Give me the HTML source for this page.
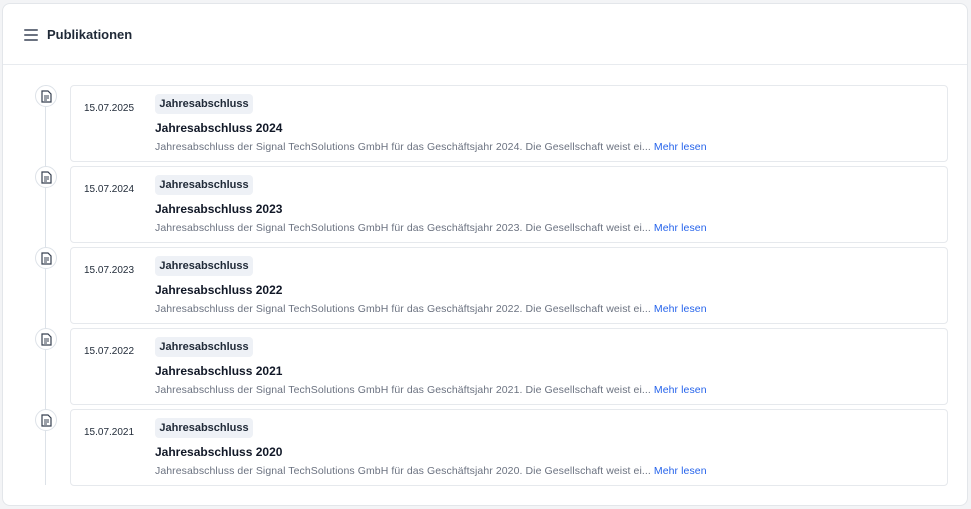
<!DOCTYPE html>
<html><head><meta charset="utf-8"><style>
*{box-sizing:border-box;margin:0;padding:0}
body{width:971px;height:509px;background:#f3f4f6;font-family:"Liberation Sans",sans-serif;position:relative;overflow:hidden}
.card{position:absolute;left:2px;top:3px;width:966px;height:503px;background:#fff;border:1px solid #e3e6ea;border-radius:8px}
.hdr{position:absolute;left:0;top:0;width:100%;height:61px;border-bottom:1px solid #e8ebef}
.ham{position:absolute;left:21px;top:25px;width:14px}
.ham i{display:block;height:2px;background:#6b7280;margin-bottom:3px;border-radius:1px}
.ttl{position:absolute;left:44px;top:23px;font-size:13px;font-weight:bold;color:#1f2937}
.line{position:absolute;left:45px;top:107px;width:1px;height:378px;background:#dde2e8}
.ic{position:absolute;left:35px;width:22px;height:22px;border-radius:50%;background:#fff;border:1px solid #dde2e8}
.ic svg{position:absolute;left:5px;top:4px}
.it{position:absolute;left:70px;width:878px;height:77px;border:1px solid #e6e9ed;border-radius:4px;background:#fff}
.dt{position:absolute;left:13px;top:17px;font-size:10px;color:#1f2937}
.bd{position:absolute;left:84px;top:8px;width:98px;height:20px;background:#eef1f6;border-radius:4px;font-size:11px;font-weight:bold;color:#1f2937;text-align:center;line-height:20px}
.t{position:absolute;left:84px;top:35px;font-size:12px;font-weight:bold;color:#111827}
.d{position:absolute;left:84px;top:55px;font-size:10.5px;color:#6b7280;white-space:nowrap;letter-spacing:0.08px}
.d b{color:#2563eb;font-weight:normal}
</style></head><body>
<div class="card">
<div class="hdr"><div class="ham"><i></i><i></i><i></i></div><div class="ttl">Publikationen</div></div>
</div>
<div class="line"></div>
<div class="ic" style="top:85px"><svg width="11" height="13" viewBox="0 0 11 13"><path d="M1 1h6l3 3v8H1z" fill="none" stroke="#374151" stroke-width="1.2"/><path d="M3 6h5M3 8h5M3 10h3" stroke="#374151" stroke-width="1"/></svg></div>
<div class="it" style="top:85px"><div class="dt">15.07.2025</div><div class="bd">Jahresabschluss</div><div class="t">Jahresabschluss 2024</div><div class="d">Jahresabschluss der Signal TechSolutions GmbH für das Geschäftsjahr 2024. Die Gesellschaft weist ei... <b>Mehr lesen</b></div></div>
<div class="ic" style="top:166px"><svg width="11" height="13" viewBox="0 0 11 13"><path d="M1 1h6l3 3v8H1z" fill="none" stroke="#374151" stroke-width="1.2"/><path d="M3 6h5M3 8h5M3 10h3" stroke="#374151" stroke-width="1"/></svg></div>
<div class="it" style="top:166px"><div class="dt">15.07.2024</div><div class="bd">Jahresabschluss</div><div class="t">Jahresabschluss 2023</div><div class="d">Jahresabschluss der Signal TechSolutions GmbH für das Geschäftsjahr 2023. Die Gesellschaft weist ei... <b>Mehr lesen</b></div></div>
<div class="ic" style="top:247px"><svg width="11" height="13" viewBox="0 0 11 13"><path d="M1 1h6l3 3v8H1z" fill="none" stroke="#374151" stroke-width="1.2"/><path d="M3 6h5M3 8h5M3 10h3" stroke="#374151" stroke-width="1"/></svg></div>
<div class="it" style="top:247px"><div class="dt">15.07.2023</div><div class="bd">Jahresabschluss</div><div class="t">Jahresabschluss 2022</div><div class="d">Jahresabschluss der Signal TechSolutions GmbH für das Geschäftsjahr 2022. Die Gesellschaft weist ei... <b>Mehr lesen</b></div></div>
<div class="ic" style="top:328px"><svg width="11" height="13" viewBox="0 0 11 13"><path d="M1 1h6l3 3v8H1z" fill="none" stroke="#374151" stroke-width="1.2"/><path d="M3 6h5M3 8h5M3 10h3" stroke="#374151" stroke-width="1"/></svg></div>
<div class="it" style="top:328px"><div class="dt">15.07.2022</div><div class="bd">Jahresabschluss</div><div class="t">Jahresabschluss 2021</div><div class="d">Jahresabschluss der Signal TechSolutions GmbH für das Geschäftsjahr 2021. Die Gesellschaft weist ei... <b>Mehr lesen</b></div></div>
<div class="ic" style="top:409px"><svg width="11" height="13" viewBox="0 0 11 13"><path d="M1 1h6l3 3v8H1z" fill="none" stroke="#374151" stroke-width="1.2"/><path d="M3 6h5M3 8h5M3 10h3" stroke="#374151" stroke-width="1"/></svg></div>
<div class="it" style="top:409px"><div class="dt">15.07.2021</div><div class="bd">Jahresabschluss</div><div class="t">Jahresabschluss 2020</div><div class="d">Jahresabschluss der Signal TechSolutions GmbH für das Geschäftsjahr 2020. Die Gesellschaft weist ei... <b>Mehr lesen</b></div></div>
</body></html>
